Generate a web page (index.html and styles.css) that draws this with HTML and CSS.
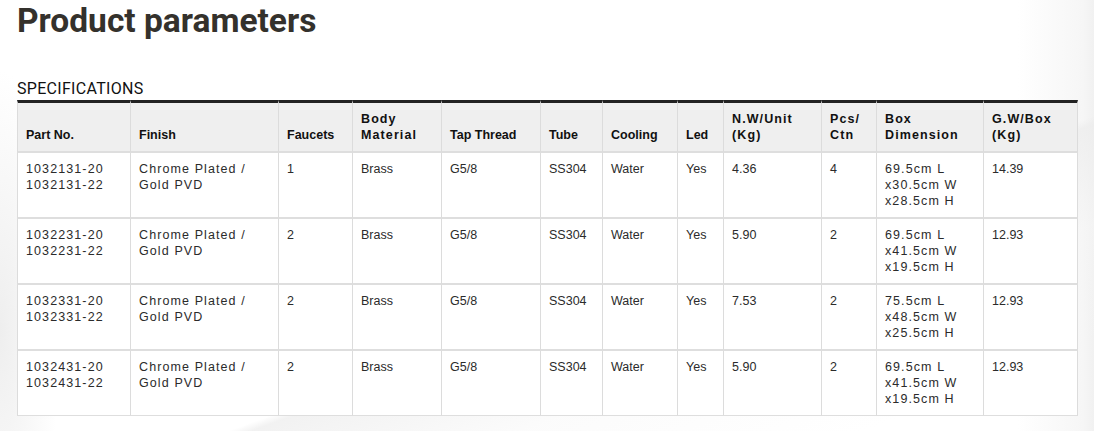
FILE: index.html
```html
<!DOCTYPE html>
<html lang="en">
<head>
<meta charset="utf-8">
<title>Product parameters</title>
<link rel="stylesheet" href="styles.css">
</head>
<body>
<main class="page">
  <h1 class="title">Product parameters</h1>
  <h2 class="subtitle">SPECIFICATIONS</h2>
  <table class="spec">
    <thead>
      <tr>
        <th class="c1">Part No.</th>
        <th class="c2">Finish</th>
        <th class="c3">Faucets</th>
        <th class="c4 sp">Body<br>Material</th>
        <th class="c5">Tap Thread</th>
        <th class="c6">Tube</th>
        <th class="c7">Cooling</th>
        <th class="c8">Led</th>
        <th class="c9 sp">N.W/Unit<br>(Kg)</th>
        <th class="c10 sp">Pcs/<br>Ctn</th>
        <th class="c11 sp">Box<br>Dimension</th>
        <th class="c12 sp">G.W/Box<br>(Kg)</th>
      </tr>
    </thead>
    <tbody>
      <tr>
        <td class="sp">1032131-20<br>1032131-22</td>
        <td class="sp">Chrome Plated /<br>Gold PVD</td>
        <td class="sp">1</td>
        <td>Brass</td>
        <td>G5/8</td>
        <td>SS304</td>
        <td>Water</td>
        <td>Yes</td>
        <td>4.36</td>
        <td>4</td>
        <td class="sp">69.5cm L<br>x30.5cm W<br>x28.5cm H</td>
        <td>14.39</td>
      </tr>
      <tr>
        <td class="sp">1032231-20<br>1032231-22</td>
        <td class="sp">Chrome Plated /<br>Gold PVD</td>
        <td class="sp">2</td>
        <td>Brass</td>
        <td>G5/8</td>
        <td>SS304</td>
        <td>Water</td>
        <td>Yes</td>
        <td>5.90</td>
        <td>2</td>
        <td class="sp">69.5cm L<br>x41.5cm W<br>x19.5cm H</td>
        <td>12.93</td>
      </tr>
      <tr>
        <td class="sp">1032331-20<br>1032331-22</td>
        <td class="sp">Chrome Plated /<br>Gold PVD</td>
        <td class="sp">2</td>
        <td>Brass</td>
        <td>G5/8</td>
        <td>SS304</td>
        <td>Water</td>
        <td>Yes</td>
        <td>7.53</td>
        <td>2</td>
        <td class="sp">75.5cm L<br>x48.5cm W<br>x25.5cm H</td>
        <td>12.93</td>
      </tr>
      <tr>
        <td class="sp">1032431-20<br>1032431-22</td>
        <td class="sp">Chrome Plated /<br>Gold PVD</td>
        <td class="sp">2</td>
        <td>Brass</td>
        <td>G5/8</td>
        <td>SS304</td>
        <td>Water</td>
        <td>Yes</td>
        <td>5.90</td>
        <td>2</td>
        <td class="sp">69.5cm L<br>x41.5cm W<br>x19.5cm H</td>
        <td>12.93</td>
      </tr>
    </tbody>
  </table>
</main>
</body>
</html>
```

FILE: styles.css
```css
* { box-sizing: border-box; }

html, body {
  margin: 0;
  height: 100%;
}

body {
  background:
    linear-gradient(160deg, rgba(255,255,255,0) 62%, rgba(236,236,236,0.7) 63%, rgba(246,246,246,0.4) 75%, rgba(255,255,255,0) 90%),
    radial-gradient(ellipse 60px 260px at 0 330px, #eeeeee 0, rgba(255,255,255,0) 100%),
    linear-gradient(90deg, #ffffff 0, #ffffff 93%, #f6f6f6 99%, #f1f1f1 100%);
  font-family: "Liberation Sans", Arial, sans-serif;
  color: #333;
}

.page {
  padding: 2px 0 0 17px;
}

.title {
  margin: 0;
  font-family: Roboto, "Liberation Sans", sans-serif;
  font-weight: 700;
  font-size: 33.5px;
  line-height: 38px;
  color: #34312c;
}

.subtitle {
  margin: 40px 0 2px;
  font-family: Roboto, "Liberation Sans", sans-serif;
  font-weight: 400;
  font-size: 16px;
  line-height: 18px;
  letter-spacing: 0.3px;
  color: #111;
}

.spec {
  width: 1061px;
  table-layout: fixed;
  border-collapse: separate;
  border-spacing: 0;
  font-size: 12.5px;
  line-height: 16px;
}

.spec th,
.spec td {
  padding: 8px 8px;
  border-right: 1px solid #dcdcdc;
  border-bottom: 2px solid #dedede;
  text-align: left;
}

.spec th:first-child,
.spec td:first-child {
  border-left: 1px solid #dcdcdc;
}

.spec th {
  background: #efefef;
  border-top: 3px solid #222;
  vertical-align: bottom;
  font-weight: 700;
  color: #111;
}

.spec td {
  background: #fff;
  vertical-align: top;
  color: #2b2b2b;
}

.spec tbody tr:last-child td {
  border-bottom-width: 1px;
}

.spec .sp { letter-spacing: 1.1px; }

.c1 { width: 114px; }
.c2 { width: 148px; }
.c3 { width: 74px; }
.c4 { width: 89px; }
.c5 { width: 99px; }
.c6 { width: 62px; }
.c7 { width: 75px; }
.c8 { width: 46px; }
.c9 { width: 98px; }
.c10 { width: 55px; }
.c11 { width: 107px; }
.c12 { width: 94px; }
```
